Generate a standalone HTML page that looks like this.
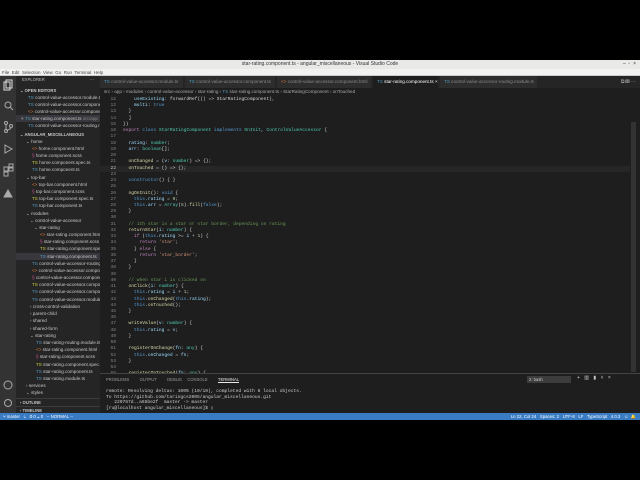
<!DOCTYPE html>
<html><head><style>
*{margin:0;padding:0;box-sizing:border-box}
body{width:640px;height:480px;background:#000;position:relative;overflow:hidden;font-family:"Liberation Sans",sans-serif}
.abs{position:absolute}
#title{left:0;top:60px;width:640px;height:9px;background:#e9e9e7;font-size:5px;color:#333;text-align:center;line-height:9px}
#menu{left:0;top:69px;width:640px;height:7px;background:#f2f2f0;font-size:4.5px;color:#444;line-height:7px;padding-left:2px;border-bottom:1px solid #ccc}
#act{left:0;top:76px;width:16px;height:337px;background:#333333}
#side{left:16px;top:76px;width:84px;height:337px;background:#252526;font-size:4.6px;color:#c8c8c8}
#side div{position:absolute;white-space:nowrap;height:7px;line-height:7px;overflow:hidden;width:84px}
#editor{left:100px;top:76px;width:540px;height:297px;background:#1e1e1e}
#tabs{left:100px;top:76px;width:540px;height:12px;background:#252526}
.tab{position:absolute;top:0;height:12px;line-height:12px;font-size:4.6px;color:#8a8a8a;background:#2d2d2d;padding-left:4px;border-right:1px solid #252526;white-space:nowrap}
#bc{left:100px;top:88px;width:540px;height:8px;font-size:4.6px;color:#aaa;line-height:8px;padding-left:4px;background:#1e1e1e}
#code{left:100px;top:97px;font-family:"Liberation Mono",monospace;font-size:4.6px;color:#d4d4d4}
#code div{height:6.24px;line-height:6.24px;white-space:pre}
.n{display:inline-block;width:16px;text-align:right;color:#858585;margin-right:7px}
.k{color:#569cd6}.c{color:#c586c0}.t{color:#4ec9b0}.f{color:#dcdcaa}.s{color:#ce9178}.v{color:#9cdcfe}.m{color:#6a9955}.nb{color:#b5cea8}
#panel{left:100px;top:373px;width:540px;height:40px;background:#1e1e1e;border-top:1px solid #444}
#status{left:0;top:413px;width:640px;height:7px;background:#3a7cc4;font-size:4.3px;color:#fff;line-height:7px}
</style></head><body>
<div class="abs" id="title">star-rating.component.ts - angular_miscellaneous - Visual Studio Code<span style="position:absolute;right:4px">–&nbsp;&nbsp;▫&nbsp;&nbsp;×</span></div>
<div class="abs" id="menu">File&nbsp; Edit&nbsp; Selection&nbsp; View&nbsp; Go&nbsp; Run&nbsp; Terminal&nbsp; Help</div>
<div class="abs" id="act">
<svg width="16" height="337" fill="none" stroke="#aaa" stroke-width="1">
<rect x="4" y="6" width="6" height="8" stroke="#ddd"/><rect x="6" y="4" width="6" height="8" stroke="#ddd"/>
<circle cx="8" cy="29" r="3"/><path d="M10 31l3 3"/>
<circle cx="6" cy="47" r="1.5"/><circle cx="6" cy="55" r="1.5"/><circle cx="11" cy="50" r="1.5"/><path d="M6 48v6M11 51q0 3-5 3"/>
<path d="M5 69l7 4-7 4z"/>
<rect x="4" y="91" width="4" height="4"/><rect x="9" y="91" width="4" height="4"/><rect x="4" y="96" width="4" height="4"/><rect x="9" y="88" width="4" height="4"/>
<path d="M4 121l4-7 4 7z" fill="#aaa"/>
<circle cx="8" cy="309" r="4"/><circle cx="8" cy="327" r="3.5"/>
</svg></div>
<div class="abs" id="side">
<div style="top:0;padding-left:6px;font-size:4.2px;color:#bbb">EXPLORER<span style="position:absolute;right:6px">···</span></div>
<div style="top:11px;padding-left:4px;font-size:4.2px;font-weight:bold">⌄ OPEN EDITORS</div>
<div style="top:18px;padding-left:12px"><span style="color:#519aba">TS</span> control-value-accessor.module.ts</div>
<div style="top:25px;padding-left:12px"><span style="color:#519aba">TS</span> control-value-accessor.component.ts</div>
<div style="top:32px;padding-left:12px"><span style="color:#e37933">&lt;&gt;</span> control-value-accessor.component.html</div>
<div style="top:39px;padding-left:5px;background:#37373d">× <span style="color:#519aba">TS</span> star-rating.component.ts <span style="color:#888">src/app</span></div>
<div style="top:46px;padding-left:12px"><span style="color:#519aba">TS</span> control-value-accessor-routing.module.ts</div>
<div style="top:55px;padding-left:4px;font-size:4.2px;font-weight:bold">⌄ ANGULAR_MISCELLANEOUS</div>
<div style="top:62px;padding-left:10px">⌄ home</div>
<div style="top:69px;padding-left:16px"><span style="color:#e37933">&lt;&gt;</span> home.component.html</div>
<div style="top:76px;padding-left:16px"><span style="color:#c6538c">§</span> home.component.scss</div>
<div style="top:83px;padding-left:16px"><span style="color:#cbcb41">TS</span> home.component.spec.ts</div>
<div style="top:90px;padding-left:16px"><span style="color:#519aba">TS</span> home.component.ts</div>
<div style="top:98px;padding-left:10px">⌄ top-bar</div>
<div style="top:105px;padding-left:16px"><span style="color:#e37933">&lt;&gt;</span> top-bar.component.html</div>
<div style="top:112px;padding-left:16px"><span style="color:#c6538c">§</span> top-bar.component.scss</div>
<div style="top:119px;padding-left:16px"><span style="color:#cbcb41">TS</span> top-bar.component.spec.ts</div>
<div style="top:126px;padding-left:16px"><span style="color:#519aba">TS</span> top-bar.component.ts</div>
<div style="top:134px;padding-left:10px">⌄ modules</div>
<div style="top:141px;padding-left:14px">⌄ control-value-accessor</div>
<div style="top:148px;padding-left:18px">⌄ star-rating</div>
<div style="top:155px;padding-left:24px"><span style="color:#e37933">&lt;&gt;</span> star-rating.component.html</div>
<div style="top:162px;padding-left:24px"><span style="color:#c6538c">§</span> star-rating.component.scss</div>
<div style="top:169px;padding-left:24px"><span style="color:#cbcb41">TS</span> star-rating.component.spec.ts</div>
<div style="top:177px;padding-left:24px;background:#37373d"><span style="color:#519aba">TS</span> star-rating.component.ts</div>
<div style="top:184px;padding-left:16px"><span style="color:#519aba">TS</span> control-value-accessor-routing.module.ts</div>
<div style="top:191px;padding-left:16px"><span style="color:#e37933">&lt;&gt;</span> control-value-accessor.component.html</div>
<div style="top:198px;padding-left:16px"><span style="color:#c6538c">§</span> control-value-accessor.component.scss</div>
<div style="top:205px;padding-left:16px"><span style="color:#cbcb41">TS</span> control-value-accessor.component.spec.ts</div>
<div style="top:212px;padding-left:16px"><span style="color:#519aba">TS</span> control-value-accessor.component.ts</div>
<div style="top:220px;padding-left:16px"><span style="color:#519aba">TS</span> control-value-accessor.module.ts</div>
<div style="top:227px;padding-left:14px">› cross-control-validation</div>
<div style="top:234px;padding-left:14px">› parent-child</div>
<div style="top:241px;padding-left:14px">› shared</div>
<div style="top:249px;padding-left:14px">› shared-form</div>
<div style="top:256px;padding-left:14px">⌄ star-rating</div>
<div style="top:263px;padding-left:20px"><span style="color:#519aba">TS</span> star-rating-routing.module.ts</div>
<div style="top:270px;padding-left:20px"><span style="color:#e37933">&lt;&gt;</span> star-rating.component.html</div>
<div style="top:277px;padding-left:20px"><span style="color:#c6538c">§</span> star-rating.component.scss</div>
<div style="top:285px;padding-left:20px"><span style="color:#cbcb41">TS</span> star-rating.component.spec.ts</div>
<div style="top:292px;padding-left:20px"><span style="color:#519aba">TS</span> star-rating.component.ts</div>
<div style="top:299px;padding-left:20px"><span style="color:#519aba">TS</span> star-rating.module.ts</div>
<div style="top:306px;padding-left:10px">› services</div>
<div style="top:313px;padding-left:10px">⌄ styles</div>
<div style="top:322px;padding-left:4px;font-size:4.2px;font-weight:bold;border-top:1px solid #3c3c3c">› OUTLINE</div>
<div style="top:330px;padding-left:4px;font-size:4.2px;font-weight:bold;border-top:1px solid #3c3c3c">› TIMELINE</div>
</div>
<div class="abs" id="editor"></div>
<div class="abs" id="tabs">
<div class="tab" style="left:0;width:84px"><span style="color:#519aba">TS</span> control-value-accessor.module.ts</div>
<div class="tab" style="left:85px;width:91px"><span style="color:#519aba">TS</span> control-value-accessor.component.ts</div>
<div class="tab" style="left:177px;width:95px"><span style="color:#e37933">&lt;&gt;</span> control-value-accessor.component.html</div>
<div class="tab" style="left:273px;width:66px;background:#1e1e1e;color:#fff"><span style="color:#519aba">TS</span> star-rating.component.ts ×</div>
<div class="tab" style="left:340px;width:98px;font-style:italic"><span style="color:#519aba">TS</span> control-value-accessor-routing.module.ts</div>
<div style="position:absolute;right:4px;top:0;line-height:12px;font-size:5px;color:#aaa">⧉ ▥ ···</div>
</div>
<div class="abs" id="bc">src › app › modules › control-value-accessor › star-rating › <span style="color:#519aba">TS</span> star-rating.component.ts › StarRatingComponent › onTouched</div>
<div class="abs" id="code">
<div><span class="n">12</span>    <span class="v">useExisting</span>: forwardRef(() =&gt; StarRatingComponent),</div>
<div><span class="n">12</span>    <span class="v">multi</span>: <span class="k">true</span></div>
<div><span class="n">13</span>  }</div>
<div><span class="n">14</span>  ]</div>
<div><span class="n">15</span>})</div>
<div><span class="n">16</span><span class="c">export</span> <span class="k">class</span> <span class="t">StarRatingComponent</span> <span class="k">implements</span> <span class="t">OnInit</span>, <span class="t">ControlValueAccessor</span> {</div>
<div><span class="n">17</span></div>
<div><span class="n">18</span>  <span class="v">rating</span>: <span class="t">number</span>;</div>
<div><span class="n">19</span>  <span class="v">arr</span>: <span class="t">boolean</span>[];</div>
<div><span class="n">20</span></div>
<div><span class="n">21</span>  <span class="f">onChanged</span> = (<span class="v">v</span>: <span class="t">number</span>) =&gt; {};</div>
<div style="background:#262626;width:530px"><span class="n" style="color:#c6c6c6">22</span>  <span class="f">onTouched</span> = () =&gt; {};</div>
<div><span class="n">23</span></div>
<div><span class="n">24</span>  <span class="k">constructor</span>() { }</div>
<div><span class="n">25</span></div>
<div><span class="n">26</span>  <span class="f">ngOnInit</span>(): <span class="k">void</span> {</div>
<div><span class="n">27</span>    <span class="k">this</span>.<span class="v">rating</span> = <span class="nb">0</span>;</div>
<div><span class="n">28</span>    <span class="k">this</span>.<span class="v">arr</span> = <span class="t">Array</span>(<span class="nb">5</span>).<span class="f">fill</span>(<span class="k">false</span>);</div>
<div><span class="n">29</span>  }</div>
<div><span class="n">30</span></div>
<div><span class="n">31</span>  <span class="m">// ith star is a star or star border, depending on rating</span></div>
<div><span class="n">32</span>  <span class="f">returnStar</span>(<span class="v">i</span>: <span class="t">number</span>) {</div>
<div><span class="n">33</span>    <span class="c">if</span> (<span class="k">this</span>.<span class="v">rating</span> &gt;= <span class="v">i</span> + <span class="nb">1</span>) {</div>
<div><span class="n">34</span>      <span class="c">return</span> <span class="s">'star'</span>;</div>
<div><span class="n">35</span>    } <span class="c">else</span> {</div>
<div><span class="n">36</span>      <span class="c">return</span> <span class="s">'star_border'</span>;</div>
<div><span class="n">37</span>    }</div>
<div><span class="n">38</span>  }</div>
<div><span class="n">39</span></div>
<div><span class="n">40</span>  <span class="m">// when star i is clicked on</span></div>
<div><span class="n">41</span>  <span class="f">onClick</span>(<span class="v">i</span>: <span class="t">number</span>) {</div>
<div><span class="n">42</span>    <span class="k">this</span>.<span class="v">rating</span> = <span class="v">i</span> + <span class="nb">1</span>;</div>
<div><span class="n">43</span>    <span class="k">this</span>.<span class="f">onChanged</span>(<span class="k">this</span>.<span class="v">rating</span>);</div>
<div><span class="n">44</span>    <span class="k">this</span>.<span class="f">onTouched</span>();</div>
<div><span class="n">45</span>  }</div>
<div><span class="n">46</span></div>
<div><span class="n">47</span>  <span class="f">writeValue</span>(<span class="v">v</span>: <span class="t">number</span>) {</div>
<div><span class="n">48</span>    <span class="k">this</span>.<span class="v">rating</span> = <span class="v">v</span>;</div>
<div><span class="n">49</span>  }</div>
<div><span class="n">50</span></div>
<div><span class="n">51</span>  <span class="f">registerOnChange</span>(<span class="v">fn</span>: <span class="t">any</span>) {</div>
<div><span class="n">52</span>    <span class="k">this</span>.<span class="v">onChanged</span> = <span class="v">fn</span>;</div>
<div><span class="n">53</span>  }</div>
<div><span class="n">54</span></div>
<div><span class="n">55</span>  <span class="f">registerOnTouched</span>(<span class="v">fn</span>: <span class="t">any</span>) {</div>
</div>
<div class="abs" style="left:631px;top:122px;width:5px;height:250px;background:#333"></div>
<div class="abs" id="panel">
<div style="position:absolute;left:6px;top:3px;font-size:4.2px;color:#999;word-spacing:4px">PROBLEMS&nbsp; OUTPUT&nbsp; DEBUG&nbsp;CONSOLE&nbsp; <span style="color:#e7e7e7;border-bottom:1px solid #e7e7e7">TERMINAL</span></div>
<div style="position:absolute;left:427px;top:2px;width:44px;height:7px;background:#3c3c3c;font-size:4.2px;color:#ccc;line-height:7px;padding-left:2px">2: bash</div>
<div style="position:absolute;left:477px;top:1px;font-size:5px;color:#ccc;word-spacing:3px">+ ▥ ▮ ˄ ×</div>
<div style="position:absolute;left:6px;top:15px;font-family:'Liberation Mono',monospace;font-size:4.6px;color:#ccc;line-height:5.6px;white-space:pre">remote: Resolving deltas: 100% (10/10), completed with 8 local objects.
To https://github.com/taringcs2005/angular_miscellaneous.git
   220787d..a65be2f  master -&gt; master
[ru@localhost angular_miscellaneous]$ ▯</div>
</div>
<div class="abs" id="status"><span style="padding-left:3px">⑂ master&nbsp;&nbsp; ↻&nbsp;&nbsp; ⊗ 0 ⚠ 0&nbsp;&nbsp; -- NORMAL --</span><span style="position:absolute;right:4px">Ln 22, Col 24&nbsp;&nbsp; Spaces: 2&nbsp;&nbsp; UTF-8&nbsp;&nbsp; LF&nbsp;&nbsp; TypeScript&nbsp;&nbsp; 4.0.3&nbsp;&nbsp; ☺&nbsp; 🔔</span></div>
</body></html>
